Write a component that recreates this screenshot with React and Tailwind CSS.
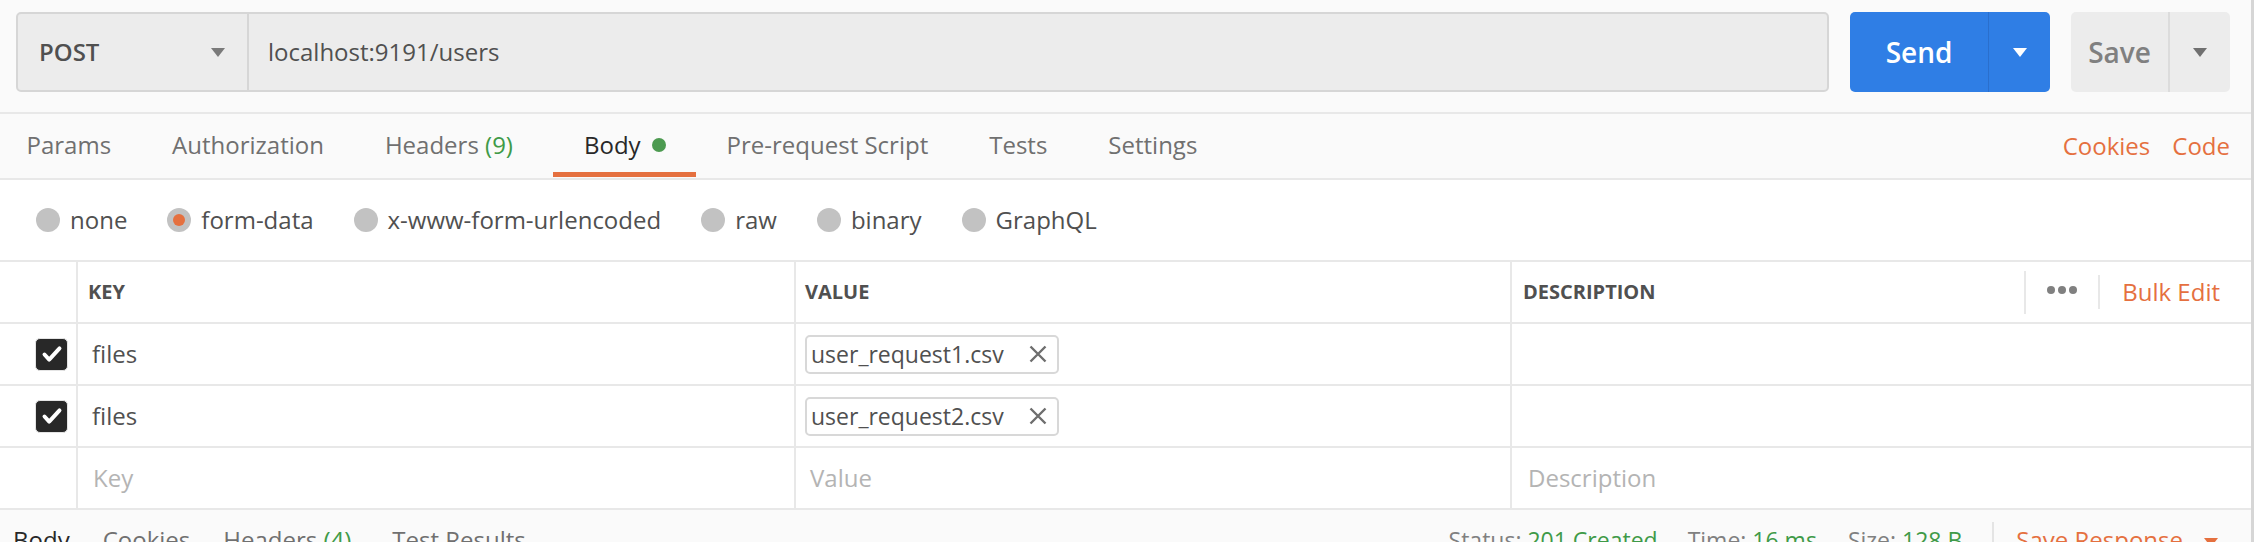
import React from 'react';

const Caret = ({ className }) => (
    <svg viewBox="0 0 14 9" className={className}>
        <path d="M0 0h14L7 9z" fill="currentColor" />
    </svg>
);

const Radio = ({ label, checked }) => (
    <div className="flex items-center gap-[10px]">
        <span className="flex h-[24px] w-[24px] items-center justify-center rounded-full bg-[#c2c2c2]">
            {checked && <span className="h-[12px] w-[12px] rounded-full bg-[#e5703f]" />}
        </span>
        <span className="text-[#505050]">{label}</span>
    </div>
);

const Checkbox = () => (
    <span className="flex h-[33px] w-[33px] items-center justify-center rounded-[5px] border border-[#e4e4e4] bg-[#282828]">
        <svg viewBox="0 0 32 32" className="h-[30px] w-[30px]">
            <path d="M8 16.5l5 5.5 11-12" fill="none" stroke="#fff" strokeWidth="4.2" strokeLinecap="round" strokeLinejoin="round" />
        </svg>
    </span>
);

const FileChip = ({ name }) => (
    <div className="flex h-[39px] w-[254px] items-center justify-between rounded-[5px] border-2 border-[#d8d8d8] pl-[4px] pr-[10px]">
        <span className="text-[23px] text-[#505050]">{name}</span>
        <svg viewBox="0 0 18 18" className="h-[18px] w-[18px]">
            <path d="M1.5 1.5l15 15M16.5 1.5l-15 15" stroke="#6e6e6e" strokeWidth="2.4" />
        </svg>
    </div>
);

const Tab = ({ children, active, className = '' }) => (
    <div className={`flex h-full flex-col ${className}`}>
        <div className={`flex flex-1 items-center px-[30.5px] pt-[4px] ${active ? 'text-[#282828]' : 'text-[#707070]'}`}>{children}</div>
        <div className={`mb-[1px] h-[5px] ${active ? 'bg-[#e5703f]' : 'bg-transparent'}`} />
    </div>
);

const Row = ({ keyText, file }) => (
    <div className="grid h-[62px] grid-cols-[78px_718px_716px_1fr] border-b-2 border-[#e8e8e8]">
        <div className="flex items-center border-r-2 border-[#e8e8e8] pl-[35px]">
            <Checkbox />
        </div>
        <div className="flex items-center border-r-2 border-[#e8e8e8] pl-[14px] text-[#505050]">{keyText}</div>
        <div className="flex items-center border-r-2 border-[#e8e8e8] pl-[9px]">
            <FileChip name={file} />
        </div>
        <div />
    </div>
);

export default function App() {
    return (
        <div className="w-[2254px] border-r-[3px] border-[#d6d6d6] bg-white font-['Open_Sans',sans-serif] text-[24px] leading-[32px]">
            {/* request bar */}
            <div className="flex h-[114px] gap-[21px] border-b-2 border-[#e8e8e8] bg-[#fafafa] pl-[16px] pr-[21px] pt-[12px]">
                <div className="flex h-[80px] flex-1 rounded-[5px] border-2 border-[#d6d6d6] bg-[#ececec]">
                    <div className="flex w-[231px] items-center justify-between border-r-2 border-[#d6d6d6] pl-[21px] pr-[22px]">
                        <span className="text-[24px] font-semibold text-[#505050]">POST</span>
                        <Caret className="h-[9px] w-[14px] text-[#7a7a7a]" />
                    </div>
                    <div className="flex items-center pl-[19px] text-[24px] text-[#505050]">localhost:9191/users</div>
                </div>
                <div className="flex h-[80px] w-[200px] rounded-[5px] bg-[#2f7ee5] text-white">
                    <div className="flex w-[139px] items-center justify-center border-r border-[#2a6fcd] text-[28px] font-semibold">Send</div>
                    <div className="flex flex-1 items-center justify-center">
                        <Caret className="h-[9px] w-[14px]" />
                    </div>
                </div>
                <div className="flex h-[80px] w-[159px] rounded-[5px] bg-[#ececec] text-[#808080]">
                    <div className="flex w-[99px] items-center justify-center border-r-2 border-[#dcdcdc] text-[28px] font-semibold">Save</div>
                    <div className="flex flex-1 items-center justify-center">
                        <Caret className="h-[9px] w-[14px] text-[#707070]" />
                    </div>
                </div>
            </div>

            {/* tabs */}
            <div className="flex h-[66px] items-stretch justify-between border-b-2 border-[#e8e8e8] bg-[#fafafa]">
                <div className="-ml-[4px] flex h-full">
                    <Tab>Params</Tab>
                    <Tab>Authorization</Tab>
                    <Tab>Headers&nbsp;<span className="text-[#3f9a48]">(9)</span></Tab>
                    <Tab active className="ml-[10px]">
                        Body
                        <span className="ml-[11px] h-[14px] w-[14px] rounded-full bg-[#4c9a50]" />
                    </Tab>
                    <Tab>Pre-request Script</Tab>
                    <Tab>Tests</Tab>
                    <Tab>Settings</Tab>
                </div>
                <div className="flex items-center gap-[22px] pr-[21px] text-[#e5703f]">
                    <span>Cookies</span>
                    <span>Code</span>
                </div>
            </div>

            {/* body type */}
            <div className="flex h-[82px] items-center gap-[40px] border-b-2 border-[#e8e8e8] pl-[36px]">
                <Radio label="none" />
                <Radio label="form-data" checked />
                <Radio label="x-www-form-urlencoded" />
                <Radio label="raw" />
                <Radio label="binary" />
                <Radio label="GraphQL" />
            </div>

            {/* table header */}
            <div className="grid h-[62px] grid-cols-[78px_718px_716px_1fr] border-b-2 border-[#e8e8e8] text-[20px] font-bold text-[#505050]">
                <div className="border-r-2 border-[#e8e8e8]" />
                <div className="flex items-center border-r-2 border-[#e8e8e8] pl-[10px]">KEY</div>
                <div className="flex items-center border-r-2 border-[#e8e8e8] pl-[9px]">VALUE</div>
                <div className="flex items-center justify-between pl-[11px]">
                    <span>DESCRIPTION</span>
                    <div className="flex items-center">
                        <div className="h-[43px] w-[2px] bg-[#e8e8e8]" />
                        <div className="flex w-[72px] items-center justify-center gap-[3px] pb-[4px]">
                            <span className="h-[8px] w-[8px] rounded-full bg-[#808080]" />
                            <span className="h-[8px] w-[8px] rounded-full bg-[#808080]" />
                            <span className="h-[8px] w-[8px] rounded-full bg-[#808080]" />
                        </div>
                        <div className="h-[34px] w-[2px] bg-[#e8e8e8]" />
                        <span className="pl-[22px] pr-[31px] text-[24px] font-normal text-[#e5703f]">Bulk Edit</span>
                    </div>
                </div>
            </div>

            <Row keyText="files" file="user_request1.csv" />
            <Row keyText="files" file="user_request2.csv" />

            <div className="grid h-[62px] grid-cols-[78px_718px_716px_1fr] border-b-2 border-[#e8e8e8] text-[#b4b4b4]">
                <div className="border-r-2 border-[#e8e8e8]" />
                <div className="flex items-center border-r-2 border-[#e8e8e8] pl-[15px]">Key</div>
                <div className="flex items-center border-r-2 border-[#e8e8e8] pl-[14px]">Value</div>
                <div className="flex items-center pl-[16px]">Description</div>
            </div>

            {/* response bar */}
            <div className="flex h-[70px] justify-between bg-[#fafafa] pt-[14px]">
                <div className="flex gap-[33px] pl-[13px] text-[#707070]">
                    <span className="text-[#282828]">Body</span>
                    <span>Cookies</span>
                    <span>Headers <span className="text-[#3f9a48]">(4)</span></span>
                    <span className="ml-[8px]">Test Results</span>
                </div>
                <div className="flex items-start text-[23px] text-[#808080]">
                    <span>Status: <span className="text-[#3f9a48]">201 Created</span></span>
                    <span className="ml-[30px]">Time: <span className="text-[#3f9a48]">16 ms</span></span>
                    <span className="ml-[31px]">Size: <span className="text-[#3f9a48]">128 B</span></span>
                    <div className="ml-[30px] mt-[-2px] h-[60px] w-[2px] bg-[#e4e4e4]" />
                    <span className="ml-[22px] text-[24px] text-[#e5703f]">Save Response</span>
                    <Caret className="ml-[21px] mt-[14px] h-[9px] w-[14px] text-[#e5703f]" />
                    <div className="w-[33px]" />
                </div>
            </div>
        </div>
    );
}
